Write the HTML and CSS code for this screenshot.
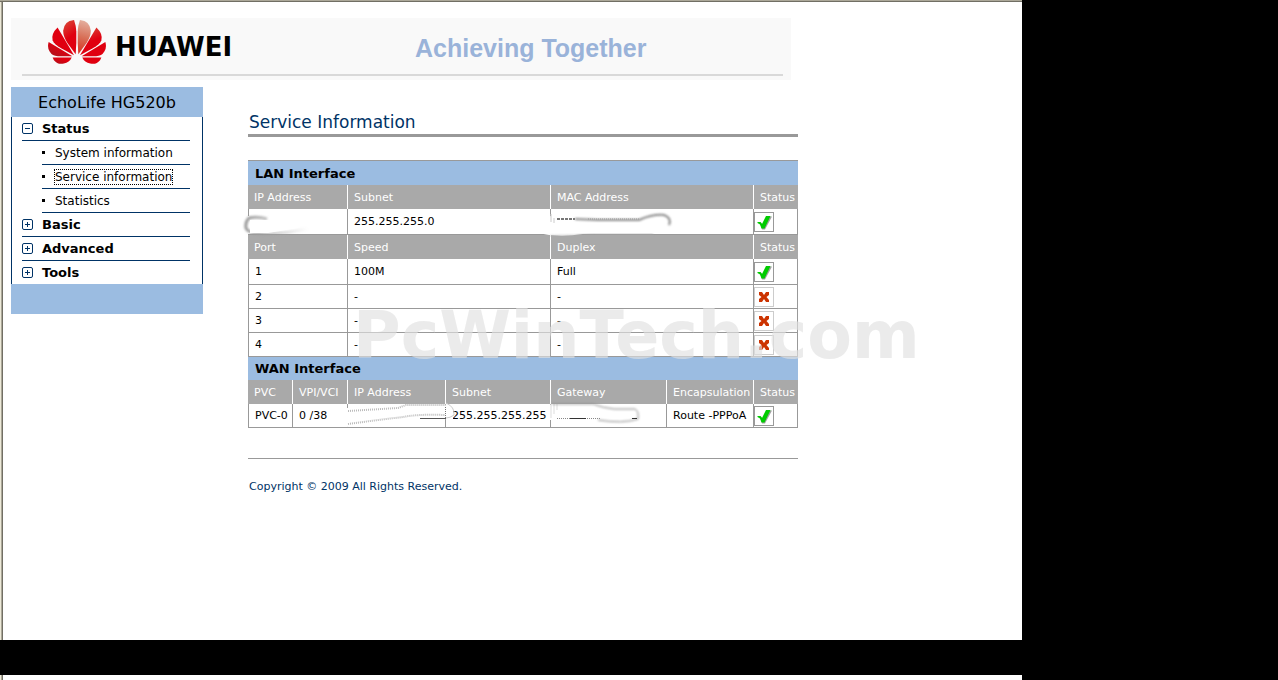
FILE: index.html
```html
<!DOCTYPE html>
<html lang="en">
<head>
<meta charset="utf-8">
<title>EchoLife HG520b</title>
<link rel="stylesheet" href="styles.css">
</head>
<body>
<svg class="defs" aria-hidden="true">
  <defs>
    <symbol id="ok" viewBox="0 0 18 18"><path d="M3 9.500h3l1.500 2 4-8H17L10 16.500H7L5.500 11.500z" fill="#777" opacity=".7"/><path d="M2.500 9H5.500L7 11 11 3h4.500L9.500 15.500H6.500L5 11.500 2.500 10z" fill="#0c0"/></symbol>
    <symbol id="no" viewBox="0 0 18 18"><path d="M4 4h3l2 3 2-3h3v3l-2.500 2L14 12v2h-3l-2-3-2 3H4v-3l2.500-2L4 7z" fill="#cc3300"/></symbol>
    <symbol id="plus" viewBox="0 0 11 11"><rect x=".5" y=".5" width="10" height="10" rx="1.500" fill="#fff" stroke="#003366"/><path d="M3 5.500h5M5.500 3v5" stroke="#003366"/></symbol>
    <symbol id="minus" viewBox="0 0 11 11"><rect x=".5" y=".5" width="10" height="10" rx="1.500" fill="#fff" stroke="#003366"/><path d="M3 5.500h5" stroke="#003366"/></symbol>
  </defs>
</svg>
<div class="screen">
  <div class="page">
    <header class="banner">
      <div class="banner-row">
        <div class="brand">
          <svg class="flower" viewBox="12 16 176 138" aria-hidden="true">
            <defs>
              <linearGradient id="g1" x1="0" y1="1" x2="1" y2="0"><stop offset="0" stop-color="#a8141c"/><stop offset=".6" stop-color="#e00010"/></linearGradient>
              <linearGradient id="g2" x1="0" y1="0" x2=".3" y2="1"><stop offset="0" stop-color="#d8503c"/><stop offset=".6" stop-color="#e00010"/></linearGradient>
              <linearGradient id="g3" x1=".4" y1="0" x2=".3" y2="1"><stop offset="0" stop-color="#e4b0a0"/><stop offset=".5" stop-color="#d87058"/><stop offset="1" stop-color="#d83020"/></linearGradient>
            </defs>
            <path d="M26 132L84 132Q77 148 60 150Q42 155 30 140z" fill="url(#g1)"/>
            <path d="M14 85Q9 102 17 114Q25 128 42 128H86z" fill="url(#g1)"/>
            <path d="M41 41Q21 60 26 80Q30 92 52 104L91 125z" fill="#e00010"/>
            <path d="M91 18Q60 21 58 51Q58 68 71 88L96 122Q99 84 98 54Q97 34 91 18z" fill="url(#g2)"/>
            <path d="M109 18Q140 21 142 51Q142 68 129 88L104 122Q101 84 102 54Q103 34 109 18z" fill="url(#g3)"/>
            <path d="M159 41Q179 60 174 80Q170 92 148 104L109 125z" fill="url(#g2)"/>
            <path d="M186 85Q191 102 183 114Q175 128 158 128H114z" fill="#e00010"/>
            <path d="M174 132L116 132Q123 148 140 150Q158 155 170 140z" fill="#e00010"/>
          </svg>
          <span class="brand-name">HUAWEI</span>
        </div>
        <p class="slogan">Achieving Together</p>
      </div>
    </header>
    <div class="columns">
      <nav class="menu">
        <h2 class="menu-title">EchoLife HG520b</h2>
        <ul class="menu-list">
          <li>
            <a class="group" href="#status"><svg class="toggle"><use href="#minus"/></svg>Status</a>
            <ul class="sub">
              <li><a href="#system"><i class="dot"></i><span>System information</span></a></li>
              <li><a href="#service"><i class="dot"></i><span class="focused">Service information</span></a></li>
              <li><a href="#statistics"><i class="dot"></i><span>Statistics</span></a></li>
            </ul>
          </li>
          <li><a class="group" href="#basic"><svg class="toggle"><use href="#plus"/></svg>Basic</a></li>
          <li><a class="group" href="#advanced"><svg class="toggle"><use href="#plus"/></svg>Advanced</a></li>
          <li><a class="group last" href="#tools"><svg class="toggle"><use href="#plus"/></svg>Tools</a></li>
        </ul>
        <div class="menu-foot"></div>
      </nav>
      <main class="content">
        <h1 class="title">Service Information</h1>
        <div class="sheet">
          <table class="info">
            <colgroup><col class="c1"><col class="c2"><col class="c3"><col class="c4"><col class="c5"><col class="c6"><col class="c7"></colgroup>
            <tbody>
              <tr class="section"><th colspan="7">LAN Interface</th></tr>
              <tr class="head"><th colspan="2">IP Address</th><th colspan="2">Subnet</th><th colspan="2">MAC Address</th><th>Status</th></tr>
              <tr class="tall"><td colspan="2"></td><td colspan="2">255.255.255.0</td><td colspan="2"></td><td class="state"><svg class="mark" role="img" aria-label="Up"><use href="#ok"/></svg></td></tr>
              <tr class="head"><th colspan="2">Port</th><th colspan="2">Speed</th><th colspan="2">Duplex</th><th>Status</th></tr>
              <tr class="tall"><td colspan="2">1</td><td colspan="2">100M</td><td colspan="2">Full</td><td class="state"><svg class="mark" role="img" aria-label="Up"><use href="#ok"/></svg></td></tr>
              <tr><td colspan="2">2</td><td colspan="2">-</td><td colspan="2">-</td><td class="state"><svg class="mark off" role="img" aria-label="Down"><use href="#no"/></svg></td></tr>
              <tr><td colspan="2">3</td><td colspan="2">-</td><td colspan="2">-</td><td class="state"><svg class="mark off" role="img" aria-label="Down"><use href="#no"/></svg></td></tr>
              <tr><td colspan="2">4</td><td colspan="2">-</td><td colspan="2">-</td><td class="state"><svg class="mark off" role="img" aria-label="Down"><use href="#no"/></svg></td></tr>
              <tr class="section low"><th colspan="7">WAN Interface</th></tr>
              <tr class="head"><th>PVC</th><th>VPI/VCI</th><th>IP Address</th><th>Subnet</th><th>Gateway</th><th>Encapsulation</th><th>Status</th></tr>
              <tr><td>PVC-0</td><td>0 /38</td><td></td><td>255.255.255.255</td><td></td><td>Route -PPPoA</td><td class="state"><svg class="mark" role="img" aria-label="Up"><use href="#ok"/></svg></td></tr>
            </tbody>
          </table>
          <svg class="smudges" viewBox="0 0 560 280" aria-hidden="true">
            <defs>
              <linearGradient id="fade"><stop offset="0" stop-color="#999"/><stop offset="1" stop-color="#aaa" stop-opacity="0"/></linearGradient>
              <filter id="soft" x="-10%" y="-30%" width="120%" height="160%"><feGaussianBlur stdDeviation="1"/></filter>
            </defs>
            <path d="M-1 56h4v18h-4z" fill="#fff"/>
            <path d="M19 59Q10 56 1 58Q-3 62 -2 68Q0 74 20 74Q40 73 60 69" fill="none" stroke="url(#fade)" stroke-width="3" filter="url(#soft)"/>
            <path d="M2 60H50V68L20 73H2z" fill="#fff"/>
            <path d="M290 73Q310 78 335 74L422 72V62Q423 55 416 55Q405 55 394 59Q370 62 330 59L301 56L301 66z" fill="#fff"/>
            <path d="M303 54V62M306 58V63" stroke="#ccc"/>
            <path d="M309 59H327" stroke="#777" stroke-width="2" stroke-dasharray="3 1"/>
            <path d="M327 59L350 60H391Q405 54 416 55Q424 58 421 65" fill="none" stroke="#888" stroke-width="2" filter="url(#soft)"/>
            <path d="M340 59H392" stroke="#999" stroke-dasharray="1 1"/>
            <path d="M302 76Q330 76 345 74H405" fill="none" stroke="#aaa" filter="url(#soft)"/>
            <path d="M99 248L150 244L200 245L205 248V259L150 260L99 267z" fill="#fff"/>
            <path d="M100 251L150 248L158 245H198" fill="none" stroke="#bbb" stroke-width="2" stroke-dasharray="1 1"/>
            <path d="M100 264L130 260L155 257Q170 254 197 255" fill="none" stroke="#bbb" stroke-width="2" stroke-dasharray="1 1"/>
            <path d="M172 258.500H198" stroke="#555"/><path d="M197.500 247V259" stroke="#777" stroke-dasharray="1 1"/>
            <path d="M198 243Q207 247 206 255Q202 258 198 258" fill="none" stroke="#ccc"/>
            <path d="M302 245H350L368 248L390 250V261Q375 264 350 260H302z" fill="#fff"/>
            <path d="M303 244V258M306 244V254M309 244V250" stroke="#ddd"/>
            <path d="M304 244H345Q355 248 366 249H387Q391 251 390 259Q375 264 350 260" fill="none" stroke="#888" filter="url(#soft)"/>
            <path d="M309 258.500H352" stroke="#888" stroke-dasharray="1 1"/><path d="M322 258.500H338M384 258.500H389" stroke="#333"/>
          </svg>
          <div class="watermark">PcWinTech.com</div>
        </div>
        <footer class="copyright">Copyright © 2009 All Rights Reserved.</footer>
      </main>
    </div>
  </div>
  <div class="strip"></div>
</div>
</body>
</html>
```
FILE: styles.css
```css
* { box-sizing: border-box; }
body { margin: 0; background: #000; color: #000; font: 11px/16px "DejaVu Sans", Verdana, sans-serif; }
h1, h2, p, ul { margin: 0; padding: 0; font-weight: normal; }
ul { list-style: none; }
a { color: inherit; text-decoration: none; }
.defs { display: block; width: 0; height: 0; }

.screen { display: flex; flex-direction: column; gap: 35px; width: 80%; min-height: 100vh; }
.page, .strip { background: linear-gradient(to right, #ece9d8 1px, #aca899 1px, #aca899 2px, #716f64 2px, #716f64 3px, #fff 3px); }
.page { flex: 1; padding: 18px 8px 0 11px; box-shadow: inset 0 1px #aca899, inset 0 2px #716f64; }
.strip { height: 5px; }

.banner { max-width: 780px; padding: 0 8px 4px 11px; background: #f9f9f9; }
.banner-row { display: flex; align-items: center; height: 58px; padding: 0 0 4px 26px; border-bottom: 2px solid #d9d9d9; }
.brand { display: flex; align-items: center; gap: 9px; width: 367px; }
.flower { width: 58px; height: 46px; margin-bottom: 4px; }
.brand-name { padding-top: 6px; font-size: 26px; line-height: 32px; font-weight: bold; }
.slogan { padding-top: 8px; color: #9ab3d9; font: bold 25px/32px "Liberation Sans", Arial, sans-serif; }

.columns { display: flex; align-items: flex-start; gap: 45px; padding-top: 7px; }
.menu { flex: 0 0 192px; background: #9bbce1; font-size: 13px; }
.menu-title { height: 30px; font-size: 16px; line-height: 31px; text-align: center; }
.menu-list { padding: 0 12px 0 10px; background: #fff; border: solid #003366; border-width: 0 1px; }
.menu-list a { display: flex; align-items: center; height: 24px; border-bottom: 1px solid #003366; white-space: nowrap; }
.menu-list .last { height: 23px; border: 0; }
.group { gap: 9px; font-weight: bold; }
.toggle { width: 11px; height: 11px; }
.sub { margin-left: 20px; font-size: 12px; }
.sub .dot { width: 3px; height: 3px; margin-right: 10px; background: #000; }
.sub span { line-height: 14px; }
.focused { outline: 1px dotted #000; }
.menu-foot { height: 30px; }

.content { flex: 0 1 550px; min-width: 0; padding-top: 24px; }
.title { padding: 0 1px; border-bottom: 3px solid #999; color: #003366; font-size: 17px; line-height: 23px; }
.sheet { position: relative; margin-top: 23px; }
.info { width: 100%; table-layout: fixed; border-collapse: separate; border-spacing: 0; border-top: 1px solid #999; }
.c1 { width: 44px; }
.c2 { width: 55px; }
.c3 { width: 98px; }
.c4 { width: 105px; }
.c5 { width: 116px; }
.c6 { width: 87px; }
.c7 { width: 45px; }
.info th, .info td { height: 24px; padding: 1px 0 0 6px; text-align: left; white-space: nowrap; font-weight: normal; line-height: 16px; }
.info td { border: solid #999; border-width: 0 0 1px 1px; }
.info td:last-child { border-right: 1px solid #999; }
.info .tall td { height: 26px; }
.info .section th { padding-left: 7px; background: #9bbce1; font-size: 13px; font-weight: bold; }
.info .low th { height: 23px; padding-top: 0; }
.info .head th { background: #a9a9a9; color: #fff; border-left: 1px solid #fff; }
.info .head th:first-child { padding-left: 5px; border-left-color: #a9a9a9; }
.info .state { padding: 0; }
.mark { display: block; width: 20px; height: 20px; border: 1px solid #999; }
.off { border-color: #ccc; }
.smudges { position: absolute; left: 0; top: 0; width: 560px; height: 280px; overflow: visible; }
.watermark { position: absolute; left: 105px; top: 136px; color: rgba(225, 225, 225, .65); font-size: 65px; line-height: 80px; font-weight: bold; pointer-events: none; }
.copyright { margin-top: 30px; padding: 20px 1px; border-top: 1px solid #999; color: #003366; }
```
